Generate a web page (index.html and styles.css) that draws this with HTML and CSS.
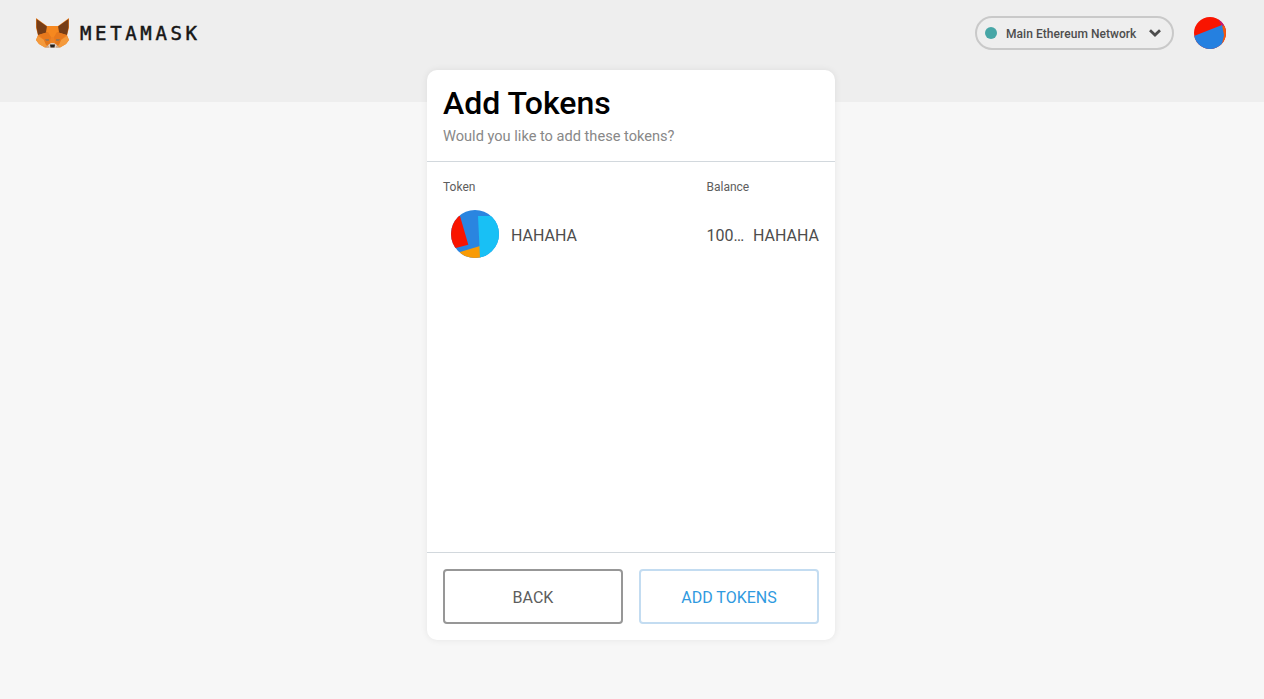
FILE: index.html
```html
<!DOCTYPE html>
<html lang="en">
<head>
<meta charset="utf-8">
<title>MetaMask</title>
<link rel="stylesheet" href="styles.css">
</head>
<body>
<header class="app-header">
  <div class="brand">
    <svg class="fox" viewBox="0 0 33 31" width="33" height="31" aria-hidden="true">
      <polygon points="0,0 11,8 22,8 33,0 33,10 31,17 33,22 30,26 24,29.5 9,29.5 3,26 0,22 2,17 0,10" fill="#ee8223"/>
      <polygon points="0.5,1 11,8.5 12,14 2,17 0.5,9" fill="#763d16"/>
      <polygon points="32.5,1 22,8.5 21,14 31,17 32.5,9" fill="#763d16"/>
      <polygon points="11,8 22,8 23,14 18,19 15,19 10,14" fill="#f6881f"/>
      <polygon points="3,17 12,14 15,19 14,24 8,22" fill="#e8791c"/>
      <polygon points="30,17 21,14 18,19 19,24 25,22" fill="#e8791c"/>
      <polygon points="2,18 8,22 11,27 9,29.5 3,26 0,22" fill="#f49a3c"/>
      <polygon points="31,18 25,22 22,27 24,29.5 30,26 33,22" fill="#f49a3c"/>
      <polygon points="8,22 14,24 13,27 10,27" fill="#e2761b"/>
      <polygon points="25,22 19,24 20,27 23,27" fill="#e2761b"/>
      <polygon points="9,21 13,21 13,23 10,23" fill="#a0764f"/>
      <polygon points="24,21 20,21 20,23 23,23" fill="#a0764f"/>
      <polygon points="12,27 15,25 18,25 21,27 20,30 13,30" fill="#e0d0c4"/>
      <polygon points="14,26.5 19,26.5 18.5,29.5 14.5,29.5" fill="#26211d"/>
      <polygon points="9,29.5 12,27.5 13,29.5" fill="#c0ad9e"/>
      <polygon points="24,29.5 21,27.5 20,29.5" fill="#c0ad9e"/>
    </svg>
    <span class="wordmark">METAMASK</span>
  </div>
  <div class="header-right">
    <div class="network-pill">
      <span class="network-dot"></span>
      <span class="network-name">Main Ethereum Network</span>
      <svg class="chevron" viewBox="0 0 12 8" width="12" height="8" aria-hidden="true">
        <polyline points="1,1.3 6,6 11,1.3" fill="none" stroke="#4d4d4d" stroke-width="2.8"/>
      </svg>
    </div>
    <svg class="account" viewBox="0 0 32 32" width="32" height="32" aria-hidden="true">
      <defs><clipPath id="acc"><circle cx="16" cy="16" r="16"/></clipPath></defs>
      <g clip-path="url(#acc)">
        <rect width="32" height="32" fill="#f91400"/>
        <polygon points="23,0 32,0 32,14 28,9" fill="#c2187a"/>
        <polygon points="28,9 32,8 32,32 26,32" fill="#f2590e"/>
        <polygon points="0,19 28,8 30,18 27,32 0,32" fill="#2580e0"/>
      </g>
    </svg>
  </div>
</header>

<main class="card">
  <section class="card-head">
    <h1 class="title">Add Tokens</h1>
    <p class="subtitle">Would you like to add these tokens?</p>
  </section>
  <section class="card-body">
    <div class="labels">
      <span>Token</span>
      <span>Balance</span>
    </div>
    <div class="token-row">
      <div class="token-id">
        <svg class="token-icon" viewBox="0 0 48 48" width="48" height="48" aria-hidden="true">
          <defs><clipPath id="tok"><circle cx="24" cy="24" r="24"/></clipPath></defs>
          <g clip-path="url(#tok)">
            <rect width="48" height="48" fill="#2a85e0"/>
            <polygon points="9,6 17.3,34.7 4.7,38 0,38 0,6" fill="#f91400"/>
            <polygon points="9,42 29,36 30,48 9,48" fill="#f99b05"/>
            <polygon points="27,6 48,6 48,48 29,48" fill="#18c0f5"/>
          </g>
        </svg>
        <span class="token-name">HAHAHA</span>
      </div>
      <div class="token-balance">
        <span class="amount">100…</span>
        <span class="symbol">HAHAHA</span>
      </div>
    </div>
  </section>
  <footer class="card-foot">
    <button class="btn btn-back" type="button">BACK</button>
    <button class="btn btn-add" type="button">ADD TOKENS</button>
  </footer>
</main>
</body>
</html>
```

FILE: styles.css
```css
* { box-sizing: border-box; }

html, body { height: 100%; }

body {
  margin: 0;
  background: #f7f7f7;
  font-family: Roboto, "Noto Sans", sans-serif;
  color: #4d4d4d;
  overflow: hidden;
}

.app-header {
  height: 102px;
  background: #eeeeee;
  display: flex;
  justify-content: space-between;
  align-items: flex-start;
  padding: 16px 38px 0 36px;
}

.brand {
  display: flex;
  align-items: center;
  gap: 11px;
  height: 34px;
}

.fox { display: block; }

.wordmark {
  font-family: "DejaVu Sans Mono", monospace;
  font-size: 19px;
  font-weight: 400;
  letter-spacing: 3.65px;
  color: #161616;
  line-height: 1;
  padding-top: 1px;
  -webkit-text-stroke: 0.5px #161616;
}

.header-right {
  display: flex;
  align-items: center;
  gap: 20px;
}

.network-pill {
  width: 199px;
  height: 34px;
  border: 2px solid #c9c9c9;
  border-radius: 17px;
  display: flex;
  align-items: center;
  padding: 0 11px 0 8px;
}

.network-dot {
  width: 12px;
  height: 12px;
  border-radius: 50%;
  background: #47a6a6;
  flex: none;
}

.network-name {
  margin-left: 9px;
  padding-top: 2px;
  font-size: 12px;
  font-weight: 500;
  letter-spacing: 0.05px;
  color: #4d4d4d;
  white-space: nowrap;
  flex: 1;
}

.chevron { flex: none; display: block; }

.account { display: block; }

.card {
  width: 408px;
  height: 570px;
  margin: -32px 0 0 427px;
  background: #fff;
  border-radius: 10px;
  box-shadow: 0 0 7px rgba(0, 0, 0, 0.08);
  display: flex;
  flex-direction: column;
}

.card-head {
  height: 92px;
  padding: 15px 16px 0;
  border-bottom: 1px solid #d2d8dd;
  flex: none;
}

.title {
  margin: 0;
  font-size: 32px;
  line-height: 36px;
  font-weight: 500;
  color: #000;
}

.subtitle {
  margin: 5px 0 0;
  font-size: 14.6px;
  line-height: 20px;
  color: #888;
}

.card-body {
  flex: 1;
  padding: 17px 16px 0;
}

.labels {
  display: grid;
  grid-template-columns: 263.5px 1fr;
  font-size: 12px;
  line-height: 16px;
  color: #5d5d5d;
}

.token-row {
  display: grid;
  grid-template-columns: 263.5px 1fr;
  align-items: center;
  margin-top: 15px;
  height: 48px;
}

.token-id {
  display: flex;
  align-items: center;
  gap: 12px;
  padding-left: 8px;
}

.token-icon { display: block; flex: none; }

.token-name,
.token-balance {
  font-size: 16px;
  color: #4d4d4d;
  padding-top: 2px;
}

.token-balance {
  display: flex;
  justify-content: space-between;
  min-width: 0;
}

.amount {
  width: 38px;
  white-space: nowrap;
}

.card-foot {
  height: 88px;
  flex: none;
  border-top: 1px solid #d2d8dd;
  padding: 16px;
  display: flex;
  gap: 16px;
}

.btn {
  flex: 1;
  height: 55px;
  background: #fff;
  border-radius: 4px;
  font-family: inherit;
  font-size: 16px;
  padding: 2px 0 0;
}

.btn-back {
  border: 2px solid #979797;
  color: #5d5d5d;
}

.btn-add {
  border: 2px solid #c3dcf1;
  color: #2f9ae0;
}
```
